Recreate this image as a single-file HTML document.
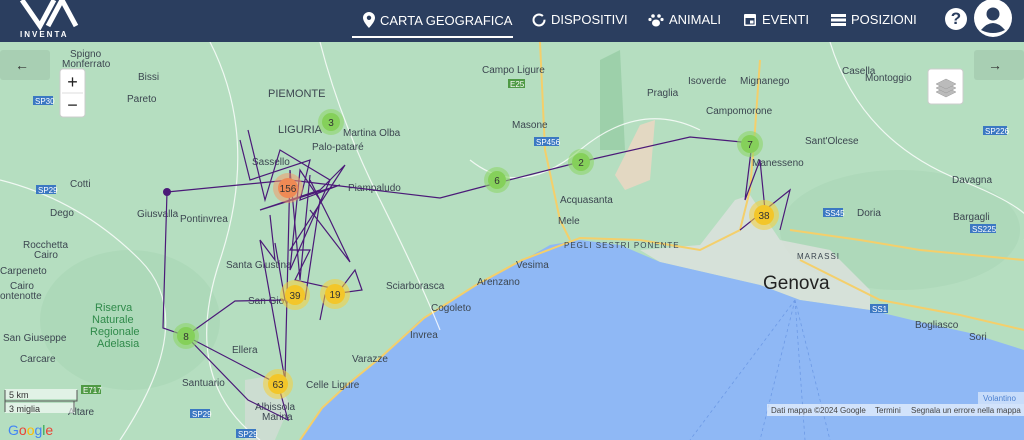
<!DOCTYPE html>
<html><head><meta charset="utf-8"><style>
*{margin:0;padding:0;box-sizing:border-box}
body{width:1024px;height:440px;overflow:hidden;font-family:"Liberation Sans",sans-serif;background:#b7dfc1;position:relative}
#hdr{position:absolute;left:0;top:0;width:1024px;height:42px;background:#2b3e5f;color:#fff;z-index:5}
.nav{position:absolute;top:12px;font-size:13px;display:flex;align-items:center;gap:5px;color:#fff}
svg.map{position:absolute;left:0;top:42px}
.lbl{font-family:"Liberation Sans",sans-serif;font-size:10px;fill:#3c4650}
</style></head><body>
<div id="hdr">
 <svg width="90" height="42" style="position:absolute;left:10px;top:0">
  <path d="M12 0 L30 26 L44 0" stroke="#fff" stroke-width="5" fill="none"/>
  <path d="M38 26 L52 0 L66 26" stroke="#fff" stroke-width="5" fill="none"/>
  <text x="10" y="37" fill="#fff" font-size="8" font-weight="bold" letter-spacing="2" font-family="Liberation Sans">INVENTA</text>
 </svg>
 <div class="nav" style="left:363px"><svg width="12" height="16" viewBox="0 0 12 16"><path d="M6 0C2.7 0 0 2.6 0 5.8 0 10 6 16 6 16s6-6 6-10.2C12 2.6 9.3 0 6 0zm0 8a2.2 2.2 0 1 1 0-4.4A2.2 2.2 0 0 1 6 8z" fill="#fff"/></svg>CARTA GEOGRAFICA</div>
 <div style="position:absolute;left:352px;top:36px;width:161px;height:2px;background:#fff"></div>
 <div class="nav" style="left:532px"><svg width="14" height="14"><circle cx="7" cy="7" r="5.5" stroke="#fff" stroke-width="2" fill="none" stroke-dasharray="30 4"/></svg>DISPOSITIVI</div>
 <div class="nav" style="left:648px"><svg width="16" height="14" viewBox="0 0 16 14"><ellipse cx="8" cy="10" rx="4" ry="3.5" fill="#fff"/><circle cx="5" cy="3" r="1.8" fill="#fff"/><circle cx="11" cy="3" r="1.8" fill="#fff"/><circle cx="2" cy="6.5" r="1.6" fill="#fff"/><circle cx="14" cy="6.5" r="1.6" fill="#fff"/></svg>ANIMALI</div>
 <div class="nav" style="left:743px"><svg width="14" height="15"><rect x="1" y="2" width="12" height="12" rx="1" fill="#fff"/><rect x="2.5" y="6" width="9" height="6.5" fill="#2b3e5f"/><rect x="7" y="8.5" width="3.5" height="3" fill="#fff"/></svg>EVENTI</div>
 <div class="nav" style="left:831px"><svg width="15" height="12"><rect x="0" y="0" width="15" height="3" fill="#fff"/><rect x="0" y="4.5" width="15" height="3" fill="#fff"/><rect x="0" y="9" width="15" height="3" fill="#fff"/></svg>POSIZIONI</div>
 <div style="position:absolute;left:945px;top:8px;width:22px;height:22px;border-radius:50%;background:#fff;color:#2b3e5f;font-weight:bold;font-size:17px;text-align:center;line-height:22px">?</div>
 <svg width="40" height="40" style="position:absolute;left:973px;top:0"><circle cx="20" cy="18" r="19" fill="#fff"/><circle cx="20" cy="14" r="6.5" fill="#2b3e5f"/><path d="M8 30 Q20 16 32 30 Q20 36 8 30z" fill="#2b3e5f"/></svg>
</div>

<svg class="map" width="1024" height="398" viewBox="0 42 1024 398">
 <rect x="0" y="42" width="1024" height="398" fill="#b5dec0"/>
 <ellipse cx="130" cy="320" rx="90" ry="70" fill="#a9d6b4" opacity=".6"/>
 <ellipse cx="900" cy="230" rx="120" ry="60" fill="#a8d4b3" opacity=".5"/>
 <path d="M600 60 L620 50 L625 150 L600 150z" fill="#93caa1" opacity=".7"/>
 <path d="M640 125 L655 120 L650 180 L625 190 L615 175z" fill="#e3d8c2"/>
 <!-- urban -->
 <path d="M640 250 L700 245 L735 200 L750 195 L780 240 L830 250 L870 290 L870 310 L800 300 L760 285 L660 262z" fill="#dfe1df" opacity=".8"/>
 <path d="M245 380 L275 375 L290 405 L275 440 L245 440z" fill="#dcdcdc" opacity=".6"/>
 <!-- sea -->
 <path d="M300 440 L320 410 L345 385 L377 360 L420 320 L473 287 L520 262 L550 245 L580 240 L620 245 L660 262 L760 285 L800 300 L870 310 L920 322 L970 333 L1024 350 L1024 440z" fill="#8fb8f5"/>
 <g stroke="#6d9ae6" stroke-width=".8" stroke-dasharray="3 3" fill="none"><path d="M795 300 L690 440"/><path d="M795 300 L760 440"/><path d="M795 300 L805 440"/><path d="M795 300 L830 440"/></g>
 <!-- roads -->
 <g stroke="#f4cf6b" stroke-width="2" fill="none">
  <path d="M300 440 L322 408 L348 384 L380 358 L424 318 L476 285 L522 260 L580 238 L640 240 L700 250 L740 230 L750 190 L755 130 L760 60"/>
  <path d="M800 260 L880 300 L960 315 L1024 330"/>
  <path d="M540 42 L545 150 L560 220 L570 240"/>
  <path d="M790 230 L860 240 L920 250 L1024 260"/>
 </g>
 <g stroke="#ffffff" stroke-width="1.2" fill="none" opacity=".8">
  <path d="M210 42 Q260 140 220 260 T260 440"/><path d="M320 42 Q340 120 380 200 T440 330"/><path d="M470 160 Q520 200 580 150 T700 130"/><path d="M830 42 Q860 140 960 180 T1024 240"/><path d="M0 180 Q80 200 140 260 T120 440"/>
 </g>
 <g class="lbl">
  <text x="70" y="57">Spigno</text><text x="62" y="67">Monferrato</text><text x="138" y="80">Bissi</text><text x="127" y="102">Pareto</text>
  <text x="268" y="97" font-size="11">PIEMONTE</text><text x="278" y="133" font-size="11">LIGURIA</text>
  <text x="343" y="136">Martina Olba</text><text x="312" y="150">Palo-pataré</text><text x="252" y="165">Sassello</text><text x="348" y="191">Piampaludo</text>
  <text x="70" y="187">Cotti</text><text x="50" y="216">Dego</text><text x="137" y="217">Giusvalla</text><text x="180" y="222">Pontinvrea</text>
  <text x="23" y="248">Rocchetta</text><text x="34" y="258">Cairo</text><text x="0" y="274">Carpeneto</text><text x="10" y="289">Cairo</text><text x="0" y="299">ontenotte</text>
  <text x="226" y="268">Santa Giustina</text><text x="248" y="304">San Giov</text>
  <text x="386" y="289">Sciarborasca</text><text x="477" y="285">Arenzano</text><text x="431" y="311">Cogoleto</text><text x="410" y="338">Invrea</text><text x="352" y="362">Varazze</text><text x="306" y="388">Celle Ligure</text>
  <text x="232" y="353">Ellera</text><text x="182" y="386">Santuario</text><text x="255" y="410">Albissola</text><text x="262" y="420">Marina</text><text x="68" y="415">Altare</text>
  <text x="3" y="341">San Giuseppe</text><text x="20" y="362">Carcare</text>
  <text x="95" y="311" fill="#2f8a4a" font-size="11">Riserva</text><text x="92" y="323" fill="#2f8a4a" font-size="11">Naturale</text><text x="90" y="335" fill="#2f8a4a" font-size="11">Regionale</text><text x="97" y="347" fill="#2f8a4a" font-size="11">Adelasia</text>
  <text x="482" y="73">Campo Ligure</text><text x="512" y="128">Masone</text><text x="560" y="203">Acquasanta</text><text x="558" y="224">Mele</text>
  <text x="647" y="96">Praglia</text><text x="688" y="84">Isoverde</text><text x="740" y="84">Mignanego</text><text x="706" y="114">Campomorone</text>
  <text x="842" y="74">Casella</text><text x="865" y="81">Montoggio</text><text x="805" y="144">Sant'Olcese</text><text x="752" y="166">Manesseno</text>
  <text x="952" y="183">Davagna</text><text x="857" y="216">Doria</text><text x="953" y="220">Bargagli</text>
  <text x="564" y="248" font-size="8" letter-spacing="1">PEGLI SESTRI PONENTE</text><text x="797" y="259" font-size="8" letter-spacing="1">MARASSI</text>
  <text x="763" y="289" font-size="19" fill="#222">Genova</text>
  <text x="915" y="328">Bogliasco</text><text x="969" y="340">Sori</text><text x="516" y="268">Vesima</text>
 </g>
 <g font-size="8" fill="#fff" font-family="Liberation Sans">
  <rect x="33" y="96" width="20" height="9" fill="#3b78c2"/><text x="35" y="104">SP30</text>
  <rect x="36" y="185" width="20" height="9" fill="#3b78c2"/><text x="38" y="193">SP29</text>
  <rect x="534" y="137" width="25" height="9" fill="#3b78c2"/><text x="536" y="145">SP456</text>
  <rect x="823" y="208" width="20" height="9" fill="#3b78c2"/><text x="825" y="216">SS45</text>
  <rect x="970" y="224" width="26" height="9" fill="#3b78c2"/><text x="972" y="232">SS225</text>
  <rect x="983" y="126" width="24" height="9" fill="#3b78c2"/><text x="985" y="134">SP226</text>
  <rect x="870" y="304" width="18" height="9" fill="#3b78c2"/><text x="872" y="312">SS1</text>
  <rect x="190" y="409" width="20" height="9" fill="#3b78c2"/><text x="192" y="417">SP29</text>
  <rect x="236" y="429" width="20" height="9" fill="#3b78c2"/><text x="238" y="437">SP29</text>
  <rect x="81" y="385" width="20" height="9" fill="#4f9a45"/><text x="83" y="393">E717</text>
  <rect x="508" y="79" width="17" height="9" fill="#4f9a45"/><text x="510" y="87">E25</text>
 </g>
 <!-- tracks -->
 <g stroke="#4b1a78" stroke-width="1.2" fill="none">
  <path d="M167 192 L290 180 L440 198 L497 183 L580 162 L690 137 L752 143"/>
  <path d="M167 192 L163 328 L186 336 L235 301 L285 300 L275 243"/>
  <path d="M186 336 L278 384 L288 420 L248 400 L186 336"/>
  <path d="M240 140 L250 180 L310 160 L300 200 L340 185 L260 210 L320 190 L345 165 L290 250 L310 250 L295 280 L340 290 L355 270 L362 290 L325 295 L320 320"/>
  <path d="M248 130 L265 200 L280 150 L330 180 L290 270 L300 170 L320 200 L305 300"/>
  <path d="M270 215 L275 260 L260 240 L285 380 L290 170 L300 280 L310 175"/>
  <path d="M310 180 L330 220 L350 262 L310 210"/>
  <path d="M752 143 L745 200 L760 160 L765 210 L740 230 L790 190 L780 230"/>
 </g>
 <circle cx="167" cy="192" r="4" fill="#4b1a78"/>
 <!-- clusters -->
 <g font-size="10" text-anchor="middle" fill="#333" font-family="Liberation Sans">
  <circle cx="288" cy="188" r="15" fill="#f29a6a" opacity=".55"/><circle cx="288" cy="188" r="10" fill="#ef8a55"/><text x="288" y="192">156</text>
  <circle cx="331" cy="122" r="13" fill="#8fd66a" opacity=".6"/><circle cx="331" cy="122" r="9" fill="#85d05a"/><text x="331" y="126">3</text>
  <circle cx="497" cy="180" r="13" fill="#8fd66a" opacity=".6"/><circle cx="497" cy="180" r="9" fill="#85d05a"/><text x="497" y="184">6</text>
  <circle cx="581" cy="162" r="13" fill="#8fd66a" opacity=".6"/><circle cx="581" cy="162" r="9" fill="#85d05a"/><text x="581" y="166">2</text>
  <circle cx="750" cy="144" r="13" fill="#8fd66a" opacity=".6"/><circle cx="750" cy="144" r="9" fill="#85d05a"/><text x="750" y="148">7</text>
  <circle cx="186" cy="336" r="13" fill="#8fd66a" opacity=".6"/><circle cx="186" cy="336" r="9" fill="#85d05a"/><text x="186" y="340">8</text>
  <circle cx="295" cy="295" r="15" fill="#f6d03a" opacity=".55"/><circle cx="295" cy="295" r="10" fill="#f3c62a"/><text x="295" y="299">39</text>
  <circle cx="335" cy="294" r="15" fill="#f6d03a" opacity=".55"/><circle cx="335" cy="294" r="10" fill="#f3c62a"/><text x="335" y="298">19</text>
  <circle cx="278" cy="384" r="15" fill="#f6d03a" opacity=".55"/><circle cx="278" cy="384" r="10" fill="#f3c62a"/><text x="278" y="388">63</text>
  <circle cx="764" cy="215" r="15" fill="#f6d03a" opacity=".55"/><circle cx="764" cy="215" r="10" fill="#f3c62a"/><text x="764" y="219">38</text>
 </g>
 <!-- controls -->
 <rect x="0" y="50" width="50" height="30" rx="3" fill="#a3c9ae" opacity=".7"/>
 <text x="15" y="70" font-size="14" fill="#333">←</text>
 <rect x="974" y="50" width="50" height="30" rx="3" fill="#a3c9ae" opacity=".7"/>
 <text x="988" y="70" font-size="14" fill="#333">→</text>
 <rect x="60" y="69" width="25" height="48" rx="3" fill="#fff" stroke="#ccc"/>
 <line x1="62" y1="93" x2="83" y2="93" stroke="#ddd"/>
 <text x="72.5" y="88" font-size="18" text-anchor="middle" fill="#222">+</text>
 <text x="72.5" y="111" font-size="18" text-anchor="middle" fill="#222">−</text>
 <rect x="928" y="69" width="35" height="35" rx="3" fill="#fff" stroke="#ccc"/>
 <g fill="#bbb" stroke="#999" stroke-width=".5"><path d="M936 92 L946 97 L956 92 L946 87z"/><path d="M936 88 L946 93 L956 88 L946 83z"/><path d="M936 84 L946 89 L956 84 L946 79z"/></g>
 <rect x="5" y="389" width="72" height="10" fill="#fff" opacity=".6"/><text x="9" y="398" font-size="9" fill="#333">5 km</text>
 <rect x="5" y="403" width="70" height="10" fill="#fff" opacity=".6"/><text x="9" y="412" font-size="9" fill="#333">3 miglia</text>
 <path d="M5 390 L5 401 L77 401 L77 390 M5 401 L5 412 M74 401 L74 412" stroke="#555" fill="none"/>
 <text x="8" y="435" font-size="14" font-family="Liberation Sans"><tspan fill="#4285f4">G</tspan><tspan fill="#ea4335">o</tspan><tspan fill="#fbbc05">o</tspan><tspan fill="#4285f4">g</tspan><tspan fill="#34a853">l</tspan><tspan fill="#ea4335">e</tspan></text>
 <rect x="978" y="392" width="46" height="12" fill="#fff" opacity=".5"/><text x="983" y="401" font-size="8" fill="#4a7fd0">Volantino</text>
 <rect x="767" y="404" width="257" height="12" fill="#fff" opacity=".6"/>
 <text x="771" y="413" font-size="8" fill="#444">Dati mappa ©2024 Google</text><text x="875" y="413" font-size="8" fill="#444">Termini</text><text x="911" y="413" font-size="8" fill="#444">Segnala un errore nella mappa</text>
</svg>
</body></html>
